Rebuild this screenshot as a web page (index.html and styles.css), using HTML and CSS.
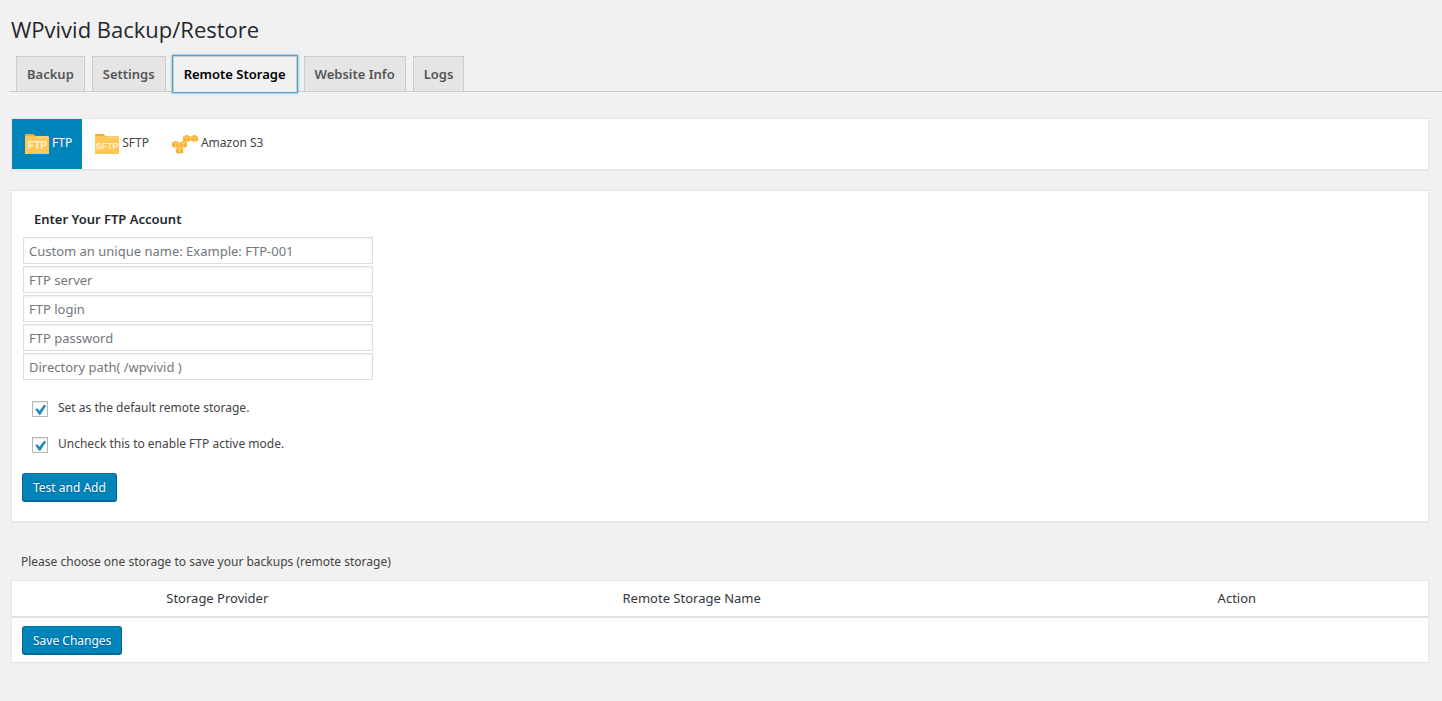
FILE: index.html
```html
<!DOCTYPE html>
<html lang="en">

<head>
    <meta charset="UTF-8">
    <meta name="viewport" content="width=device-width, initial-scale=1.0">
    <title>WPvivid Backup/Restore</title>
    <link rel="stylesheet" href="styles.css">
</head>

<body>
    <h1>WPvivid Backup/Restore</h1>

    <nav class="nav-tabs">
        <a href="#backup" class="nav-tab">Backup</a>
        <a href="#settings" class="nav-tab">Settings</a>
        <a href="#remote" class="nav-tab nav-tab-active">Remote Storage</a>
        <a href="#website" class="nav-tab">Website Info</a>
        <a href="#logs" class="nav-tab">Logs</a>
    </nav>

    <main class="wrap">
        <div class="postbox storage-tabs">
            <a href="#ftp" class="storage-tab storage-tab-active">
                <svg class="icon-folder" viewBox="0 0 24 20" aria-hidden="true">
                    <path fill="#edae3c" d="M0 1Q0 0 1 0H8Q9 0 9.500 1L10.500 2H23Q24 2 24 3V7H0Z"/>
                    <path fill="#ffe3b0" d="M10.500 2.500H23.500V4H12Z"/>
                    <path fill="#ffc755" d="M0 2H9Q10 2 11 3.500H24V20H0Z"/>
                    <text class="icon-text" x="12.500" y="15" font-size="10">FTP</text>
                </svg>
                <span>FTP</span>
            </a>
            <a href="#sftp" class="storage-tab">
                <svg class="icon-folder" viewBox="0 0 24 20" aria-hidden="true">
                    <path fill="#edae3c" d="M0 1Q0 0 1 0H8Q9 0 9.500 1L10.500 2H23Q24 2 24 3V7H0Z"/>
                    <path fill="#ffe3b0" d="M10.500 2.500H23.500V4H12Z"/>
                    <path fill="#ffc755" d="M0 2H9Q10 2 11 3.500H24V20H0Z"/>
                    <text class="icon-text" x="12" y="15" font-size="9">SFTP</text>
                </svg>
                <span>SFTP</span>
            </a>
            <a href="#s3" class="storage-tab">
                <svg class="icon-s3" viewBox="0 0 26 20" aria-hidden="true">
                    <defs>
                        <g id="cube">
                            <path fill="#f9b233" d="M0 1.300 3.700 0 7.400 1.300V5.700L3.700 7 0 5.700Z"/>
                            <path fill="none" stroke="#ffe9c2" stroke-width=".5" d="M0 1.500 3.700 2.600 7.400 1.500M3.700 2.600V7"/>
                        </g>
                    </defs>
                    <use href="#cube" x="11" y="1"/>
                    <use href="#cube" x="18.600" y="1"/>
                    <use href="#cube" x="0" y="7"/>
                    <use href="#cube" x="7.600" y="7"/>
                    <use href="#cube" x="3.800" y="13"/>
                </svg>
                <span>Amazon S3</span>
            </a>
        </div>

        <form class="postbox account">
            <h2>Enter Your FTP Account</h2>
            <div class="fields">
                <input type="text" aria-label="Name" placeholder="Custom an unique name: Example: FTP-001">
                <input type="text" aria-label="FTP server" placeholder="FTP server">
                <input type="text" aria-label="FTP login" placeholder="FTP login">
                <input type="password" aria-label="FTP password" placeholder="FTP password">
                <input type="text" aria-label="Directory path" placeholder="Directory path( /wpvivid )">
            </div>
            <label class="check"><input type="checkbox" checked><span>Set as the default remote storage.</span></label>
            <label class="check"><input type="checkbox" checked><span>Uncheck this to enable FTP active mode.</span></label>
            <button type="button" class="button-primary">Test and Add</button>
        </form>

        <p class="hint">Please choose one storage to save your backups (remote storage)</p>

        <div class="postbox">
            <table class="storage-list">
                <thead>
                    <tr>
                        <td class="col-check"></td>
                        <th class="col-provider">Storage Provider</th>
                        <th class="col-name">Remote Storage Name</th>
                        <th class="col-action">Action</th>
                    </tr>
                </thead>
                <tfoot>
                    <tr>
                        <td colspan="4"><button type="button" class="button-primary">Save Changes</button></td>
                    </tr>
                </tfoot>
            </table>
        </div>
    </main>
</body>

</html>
```
FILE: styles.css
```css
* {
    box-sizing: border-box;
}

body {
    margin: 0;
    background: #f1f1f1;
    color: #444;
    font-family: "Segoe UI", "Noto Sans", "Open Sans", sans-serif;
    font-size: 12px;
    line-height: 18px;
}

h1 {
    margin: 0 0 0 11px;
    padding: 14px 0 12px;
    color: #23282d;
    font-family: "Segoe UI", "Open Sans", sans-serif;
    font-size: 22px;
    font-weight: 400;
    line-height: 30px;
}

/* top tabs */
.nav-tabs {
    display: flex;
    gap: 7px;
    margin-left: 9px;
    padding-left: 7px;
    border-bottom: 1px solid #ccc;
}

.nav-tab {
    padding: 5px 10px;
    border: 1px solid #ccc;
    border-bottom: 0;
    background: #e5e5e5;
    color: #555;
    font-size: 13px;
    font-weight: 600;
    line-height: 24px;
    text-decoration: none;
}

.nav-tab-active {
    margin-bottom: -1px;
    border-bottom: 1px solid #f1f1f1;
    background: #f1f1f1;
    color: #000;
    box-shadow: 0 0 0 1px #5b9dd9, 0 0 2px 1px rgba(30, 140, 190, 0.8);
}

.wrap {
    margin: 26px 13px 0 11px;
}

.postbox {
    border: 1px solid #e5e5e5;
    background: #fff;
    box-shadow: 0 1px 1px rgba(0, 0, 0, 0.04);
}

/* storage provider tabs */
.storage-tabs {
    display: flex;
    margin-bottom: 20px;
}

.storage-tab {
    display: flex;
    gap: 3px;
    height: 50px;
    padding: 15px 10px 0 13px;
    color: #444;
    text-decoration: none;
}

.storage-tab-active {
    background: #0085ba;
    color: #fff;
}

.icon-folder {
    width: 24px;
    height: 20px;
}

.icon-s3 {
    width: 26px;
    height: 20px;
}

.icon-text {
    fill: #fff3dc;
    font-family: "Liberation Sans", sans-serif;
    font-weight: 700;
    text-anchor: middle;
}

/* account form */
.account {
    padding: 18px 10px 19px;
}

.account h2 {
    margin: 0 0 8px 12px;
    color: #23282d;
    font-size: 13px;
    font-weight: 600;
    line-height: 20px;
}

.fields {
    display: grid;
    gap: 2px;
    max-width: 351px;
    margin-bottom: 18px;
    padding-left: 1px;
}

.fields input {
    width: 100%;
    height: 27px;
    padding: 3px 5px;
    border: 1px solid #ddd;
    background: #fff;
    box-shadow: inset 0 1px 2px rgba(0, 0, 0, 0.07);
    color: #32373c;
    font-family: inherit;
    font-size: 13px;
}

.fields input::placeholder {
    color: #72777c;
}

.check {
    display: flex;
    align-items: flex-start;
    gap: 10px;
    width: fit-content;
    margin: 0 0 16px 10px;
    line-height: 20px;
}

.check input {
    appearance: none;
    width: 16px;
    height: 16px;
    margin: 3px 0 0;
    border: 1px solid #b4b9be;
    background: #fff;
    box-shadow: inset 0 1px 2px rgba(0, 0, 0, 0.1);
}

.check input:checked::before {
    content: "";
    display: block;
    width: 14px;
    height: 14px;
    background: #1e8cbe;
    clip-path: polygon(16% 52%, 29% 44%, 46% 63%, 79% 20%, 94% 26%, 53% 91%, 43% 91%);
}

.button-primary {
    display: block;
    height: 29px;
    padding: 2px 10px 0;
    border: 1px solid #006799;
    border-top-color: #0073aa;
    border-bottom-width: 2px;
    border-radius: 3px;
    background: #0085ba;
    color: #fff;
    font-family: inherit;
    font-size: 12px;
    line-height: 24px;
    text-shadow: 0 -1px 1px #006799, 0 1px 1px #006799;
    cursor: pointer;
}

.account .button-primary {
    margin-top: 19px;
}

/* storage list */
.hint {
    margin: 31px 10px 9px;
}

.storage-list {
    width: 100%;
    border-collapse: collapse;
    table-layout: fixed;
}

.storage-list th {
    padding: 8px 10px;
    color: #32373c;
    font-size: 13px;
    font-weight: 400;
    line-height: 19px;
}

.storage-list thead {
    border-bottom: 2px solid #e1e1e1;
}

.storage-list tfoot td {
    padding: 8px 10px 7px;
}

.col-check {
    width: 6%;
}

.col-provider {
    width: 17%;
}

.col-name {
    width: 50%;
}

.col-action {
    width: 27%;
}
```
